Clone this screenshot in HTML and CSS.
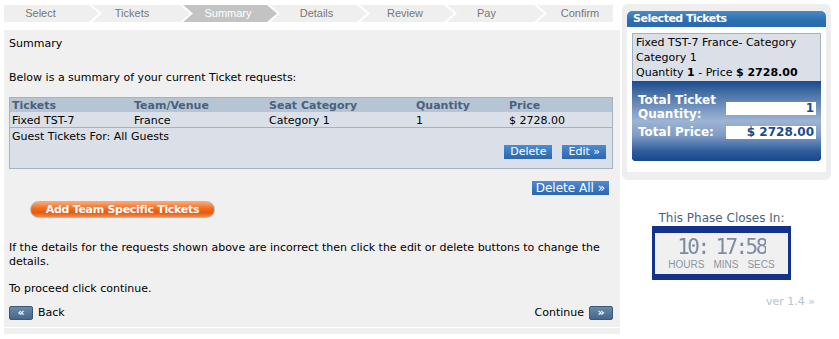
FILE: index.html
```html
<!DOCTYPE html>
<html lang="en">
  <head>
    <meta charset="UTF-8" />
    <title>Ticket Summary</title>
    <link rel="stylesheet" href="styles.css">
  </head>
  <body>
    <div class="main-col">
      <ul class="steps">
        <li>Select</li>
        <li>Tickets</li>
        <li class="active">Summary</li>
        <li>Details</li>
        <li>Review</li>
        <li>Pay</li>
        <li>Confirm</li>
      </ul>

      <div class="panel">
        <p class="title">Summary</p>
        <p class="intro">Below is a summary of your current Ticket requests:</p>

        <div class="tickets">
          <div class="row head">
            <span>Tickets</span>
            <span>Team/Venue</span>
            <span>Seat Category</span>
            <span>Quantity</span>
            <span>Price</span>
          </div>
          <div class="row">
            <span>Fixed TST-7</span>
            <span>France</span>
            <span>Category 1</span>
            <span>1</span>
            <span>$ 2728.00</span>
          </div>
          <div class="guest">
            <p>Guest Tickets For: All Guests</p>
            <div class="row-actions">
              <a href="#" class="blue-btn">Delete</a>
              <a href="#" class="blue-btn">Edit &raquo;</a>
            </div>
          </div>
        </div>

        <div class="delete-all">
          <a href="#" class="blue-btn big">Delete All &raquo;</a>
        </div>

        <a href="#" class="orange-btn">Add Team Specific Tickets</a>

        <p class="help">If the details for the requests shown above are incorrect then click the edit or delete buttons to change the details.</p>
        <p class="proceed">To proceed click continue.</p>

        <div class="nav-row">
          <a href="#" class="nav-link"><span class="arrow-btn">&laquo;</span> Back</a>
          <a href="#" class="nav-link">Continue <span class="arrow-btn">&raquo;</span></a>
        </div>
      </div>
      <div class="panel-foot"></div>
    </div>

    <div class="side-col">
      <div class="basket">
        <div class="basket-inner">
          <h2>Selected Tickets</h2>
          <div class="basket-item">
            <p>Fixed TST-7 France- Category</p>
            <p>Category 1</p>
            <p>Quantity <b>1</b> - Price <b>$ 2728.00</b></p>
          </div>
          <div class="totals">
            <div class="total-line">
              <span class="label">Total Ticket Quantity:</span>
              <span class="value">1</span>
            </div>
            <div class="total-line">
              <span class="label">Total Price:</span>
              <span class="value">$ 2728.00</span>
            </div>
          </div>
        </div>
      </div>

      <div class="timer">
        <p class="timer-title">This Phase Closes In:</p>
        <div class="clock">
          <div class="digits">
            <span>10:</span>
            <span>17:58</span>
          </div>
          <div class="units">
            <span>HOURS</span>
            <span>MINS</span>
            <span>SECS</span>
          </div>
        </div>
      </div>

      <p class="version">ver 1.4 &raquo;</p>
    </div>
  </body>
</html>
```

FILE: styles.css
```css
* {
  margin: 0;
  padding: 0;
  box-sizing: border-box;
}

body {
  background: #fff;
  color: #000;
  font-family: "DejaVu Sans", Verdana, sans-serif;
  font-size: 11px;
  line-height: 14px;
  display: flex;
  gap: 2px;
  padding: 4px 0 0 4px;
}

a {
  text-decoration: none;
}

.main-col {
  width: 616px;
}

/* progress steps */
.steps {
  list-style: none;
  display: flex;
  height: 17px;
  margin-top: 1px;
}

.steps li {
  flex: none;
  margin-left: -7px;
  background: #efefef;
  color: #777;
  font-family: "Liberation Sans", Arial, sans-serif;
  font-size: 11px;
  line-height: 17px;
  text-align: center;
  padding: 0 14px 0 10px;
  clip-path: polygon(0 0, calc(100% - 10px) 0, 100% 50%, calc(100% - 10px) 100%, 0 100%, 10px 50%);
}

.steps li:nth-child(1) {
  width: 95px;
  margin-left: 0;
  padding: 0 22px 0 0;
  clip-path: polygon(0 0, calc(100% - 10px) 0, 100% 50%, calc(100% - 10px) 100%, 0 100%);
}

.steps li:nth-child(2) {
  width: 98px;
  padding-right: 28px;
}

.steps li:nth-child(3) {
  width: 94px;
}

.steps li:nth-child(4) {
  width: 97px;
}

.steps li:nth-child(5) {
  width: 94px;
}

.steps li:nth-child(6) {
  width: 97px;
  padding-right: 28px;
}

.steps li:nth-child(7) {
  width: 76px;
  padding-right: 0;
  clip-path: polygon(0 0, 100% 0, 100% 100%, 0 100%, 10px 50%);
}

.steps li.active {
  background: #c3c3c3;
  color: #fff;
}

/* main panel */
.panel {
  background: #f0f0f0;
  margin-top: 8px;
  padding: 7px 7px 7px 5px;
}

.title {
  margin-bottom: 20px;
}

.intro {
  margin-bottom: 12px;
}

.tickets {
  border: 1px solid #a3b3c3;
  background: #dbe0e8;
}

.row {
  display: grid;
  grid-template-columns: 122px 135px 147px 93px 1fr;
  padding-left: 2px;
  height: 15px;
  line-height: 17px;
}

.row.head {
  background: #b5c5d3;
  color: #4b6080;
  font-weight: bold;
  height: 14px;
  line-height: 15px;
}

.guest {
  border-top: 1px solid #a3b3c3;
  padding: 2px 6px 9px 2px;
}

.row-actions {
  display: flex;
  justify-content: flex-end;
  gap: 10px;
  margin-top: 1px;
}

.blue-btn {
  display: inline-block;
  background: linear-gradient(#4d8bd2, #2b66ae);
  color: #fff;
  height: 14px;
  line-height: 14px;
  padding: 0 6px;
}

.blue-btn.big {
  font-size: 12px;
  height: 14px;
  padding: 0 4px;
}

.delete-all {
  display: flex;
  justify-content: flex-end;
  margin: 12px 4px 0 0;
}

.orange-btn {
  display: block;
  width: 185px;
  height: 17px;
  margin: 6px 0 0 21px;
  border: 1px solid #b8b8b8;
  border-radius: 9px;
  background: linear-gradient(#f9a877 0%, #f26a1b 45%, #e75a0c 70%, #f08a4e 100%);
  color: #fff;
  font-weight: bold;
  font-size: 11px;
  line-height: 15px;
  text-align: center;
  letter-spacing: -0.3px;
}

.help {
  margin-top: 23px;
  padding-right: 10px;
}

.proceed {
  margin-top: 13px;
}

.nav-row {
  display: flex;
  justify-content: space-between;
  align-items: center;
  margin-top: 10px;
}

.nav-link {
  color: #000;
  display: flex;
  align-items: center;
  gap: 5px;
}

.arrow-btn {
  display: inline-block;
  width: 24px;
  height: 14px;
  line-height: 12px;
  text-align: center;
  background: linear-gradient(#6a8aa8, #46668a);
  border: 1px solid #3a5878;
  border-radius: 2px;
  color: #fff;
  font-weight: bold;
}

.panel-foot {
  height: 7px;
  border-top: 1px solid #fff;
  background: #f0f0f0;
}

/* sidebar */
.side-col {
  width: 209px;
}

.basket {
  background: #eeeeee;
  border-radius: 6px;
  padding: 7px 5px 8px;
}

.basket-inner {
  background: #fff;
  padding-bottom: 11px;
}

.basket h2 {
  background: linear-gradient(#4a8ac6, #2c6eb2 60%, #2a6aae);
  border-radius: 5px 5px 0 0;
  color: #fff;
  font-size: 11px;
  letter-spacing: -0.5px;
  height: 16px;
  line-height: 16px;
  padding-left: 6px;
}

.basket-item {
  margin: 6px 5px 0;
  border: 1px solid #a3b3c3;
  border-bottom: none;
  background: #dbe0e8;
  padding: 1px 3px;
  line-height: 15px;
}

.totals {
  margin: 0 5px;
  height: 80px;
  background: linear-gradient(#1d4a8e 0%, #4e76aa 18%, #9db4d3 50%, #7f9cc4 68%, #2f5c9c 88%, #1a468c 100%);
  padding: 12px 5px 0 6px;
  clip-path: polygon(0 0, 100% 0, 100% calc(100% - 2px), calc(100% - 2px) 100%, 2px 100%, 0 calc(100% - 2px));
}

.total-line {
  display: flex;
  justify-content: space-between;
  align-items: flex-start;
  margin-bottom: 4px;
}

.total-line .label {
  width: 88px;
  color: #fff;
  font-weight: bold;
  font-size: 12px;
  line-height: 14px;
}

.total-line .value {
  width: 90px;
  height: 13px;
  margin-top: 9px;
  background: #fff;
  color: #1d4a8e;
  font-weight: bold;
  font-size: 12px;
  line-height: 13px;
  text-align: right;
  padding-right: 2px;
}

.total-line + .total-line .value {
  margin-top: 1px;
}

/* countdown */
.timer {
  margin-top: 31px;
  text-align: center;
  padding-right: 10px;
}

.timer-title {
  color: #4d6178;
  font-size: 12px;
}

.clock {
  width: 139px;
  margin: 1px auto 0;
  background: #14328c;
  padding: 7px 3px 6px;
}

.clock .digits {
  background: #f0f0f0;
  height: 25px;
  padding-top: 4px;
  display: flex;
  justify-content: center;
  gap: 8px;
}

.clock .digits span {
  font-family: "DejaVu Sans Mono", monospace;
  font-size: 21px;
  line-height: 21px;
  letter-spacing: -2.6px;
  color: #7d8ca2;
  -webkit-mask-image: radial-gradient(circle, #000 0.75px, transparent 0.85px);
  -webkit-mask-size: 2px 2px;
  mask-image: radial-gradient(circle, #000 0.75px, transparent 0.85px);
  mask-size: 2px 2px;
}

.clock .units {
  background: #f0f0f0;
  display: flex;
  justify-content: center;
  gap: 9px;
  height: 16px;
  color: #8a96a4;
  font-family: "Liberation Sans", Arial, sans-serif;
  font-size: 10px;
  line-height: 13px;
}

.version {
  margin-top: 15px;
  text-align: right;
  padding-right: 16px;
  color: #b8c3d0;
}
```
